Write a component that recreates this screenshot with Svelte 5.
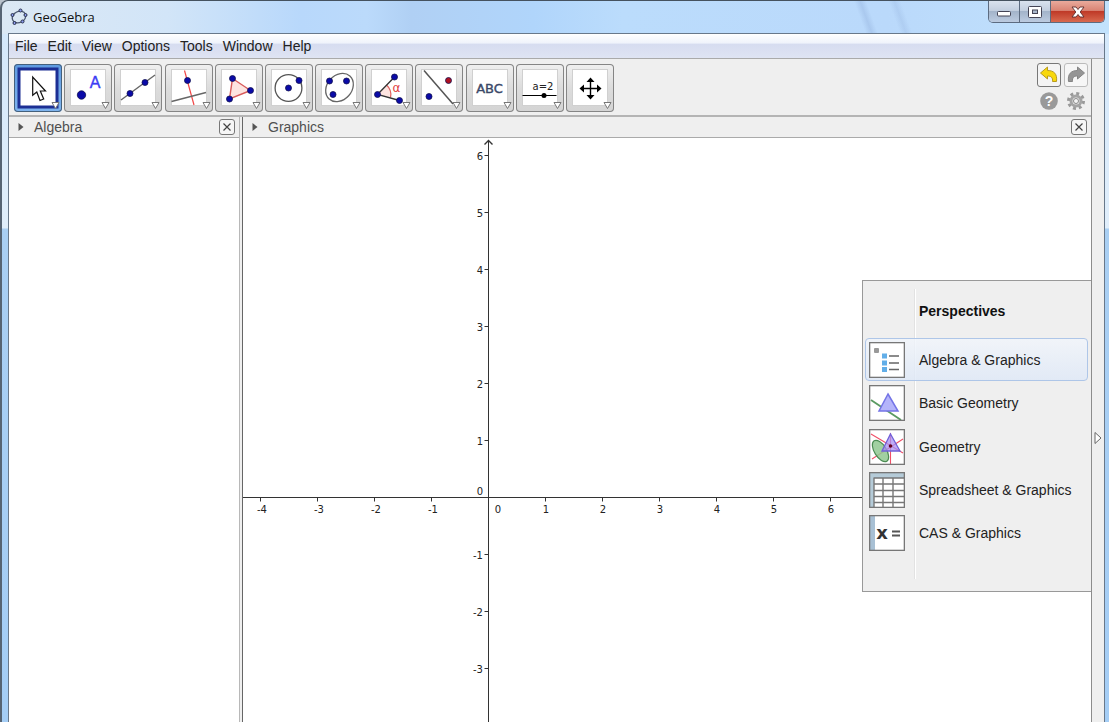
<script lang="ts">
  const menus = ['File', 'Edit', 'View', 'Options', 'Tools', 'Window', 'Help']

  const tools = [
    { id: 'move', label: 'Move' },
    { id: 'point', label: 'New Point' },
    { id: 'line', label: 'Line through Two Points' },
    { id: 'perpendicular', label: 'Perpendicular Line' },
    { id: 'polygon', label: 'Polygon' },
    { id: 'circle', label: 'Circle with Center through Point' },
    { id: 'ellipse', label: 'Ellipse' },
    { id: 'angle', label: 'Angle' },
    { id: 'reflect', label: 'Reflect about Line' },
    { id: 'text', label: 'Insert Text' },
    { id: 'slider', label: 'Slider' },
    { id: 'pan', label: 'Move Graphics View' },
  ]

  const perspectives = [
    { id: 'algebra', label: 'Algebra & Graphics' },
    { id: 'basic', label: 'Basic Geometry' },
    { id: 'geometry', label: 'Geometry' },
    { id: 'spreadsheet', label: 'Spreadsheet & Graphics' },
    { id: 'cas', label: 'CAS & Graphics' },
  ]

  // Graphics view: origin and unit length in pixels
  const origin = { x: 246, y: 360 }
  const unit = 57
  const xTicks = [-4, -3, -2, -1, 1, 2, 3, 4, 5, 6, 7, 8, 9, 10]
  const yTicks = [6, 5, 4, 3, 2, 1, -1, -2, -3]

  let activeTool = $state('move')
  let activePerspective = $state('algebra')
  let showPerspectives = $state(true)
  let showAlgebra = $state(true)
</script>

{#snippet dot(x: number, y: number, r = 3, color = '#0a0aa8')}
  <circle cx={x} cy={y} {r} fill={color} stroke="#101050" stroke-width="0.8" />
{/snippet}

{#snippet closeIcon()}
  <svg width="10" height="10" viewBox="0 0 10 10">
    <path d="M1.5 1.5L8.5 8.5M8.5 1.5L1.5 8.5" stroke="#444" stroke-width="1.2" />
  </svg>
{/snippet}

{#snippet toolIcon(id: string)}
  {#if id === 'move'}
    <path d="M18.7 13V31.3L22.8 28L26 36.5L29.7 35L26.3 27H31.5Z" fill="#fff" stroke="#111" stroke-width="1.2" />
  {:else if id === 'point'}
    {@render dot(17.5, 31, 4.2)}
    <text x="31" y="24" class="glyph-a">A</text>
  {:else if id === 'line'}
    <path d="M7 36L41 11" stroke="#666" stroke-width="1.4" />
    {@render dot(16, 29.5)}
    {@render dot(31, 18.5)}
  {:else if id === 'perpendicular'}
    <path d="M19.5 6.5L29 41" stroke="#f04848" stroke-width="1.2" />
    <path d="M6.5 37.5L41 28.5" stroke="#666" stroke-width="1.3" />
    {@render dot(22.5, 16.5)}
  {:else if id === 'polygon'}
    <path d="M17.5 14.5L35.5 26.5L14.5 35Z" fill="#fde4e0" stroke="#d85a5a" stroke-width="1.4" />
    {@render dot(17.5, 14.5)}
    {@render dot(35.5, 26.5)}
    {@render dot(14.5, 35)}
  {:else if id === 'circle'}
    <circle cx="23.5" cy="24" r="13.4" fill="none" stroke="#555" stroke-width="1.3" />
    {@render dot(23.5, 24)}
    {@render dot(34, 16.5)}
  {:else if id === 'ellipse'}
    <ellipse cx="24.5" cy="23.5" rx="15.5" ry="12.3" transform="rotate(-48 24.5 23.5)" fill="none" stroke="#666" stroke-width="1.3" />
    {@render dot(14.5, 17)}
    {@render dot(31.5, 17)}
    {@render dot(18, 30.5)}
  {:else if id === 'angle'}
    <path d="M12.5 30.5L21.5 21A13 13 0 0 1 25.5 33.5Z" fill="#fde4e0" />
    <path d="M21.5 21A13 13 0 0 1 25.5 33.5" fill="none" stroke="#e06060" stroke-width="1.2" />
    <path d="M29.5 13L12.5 30.5L34.5 36.5" fill="none" stroke="#333" stroke-width="1.3" />
    {@render dot(29.5, 13)}
    {@render dot(12.5, 30.5)}
    {@render dot(34.5, 36.5)}
    <text x="31.5" y="28" class="glyph-alpha">α</text>
  {:else if id === 'reflect'}
    <path d="M9 6.5L38 40" stroke="#555" stroke-width="1.5" />
    {@render dot(33.5, 16.5, 3, '#b01020')}
    {@render dot(14, 32.5)}
  {:else if id === 'text'}
    <text x="23.5" y="29" class="glyph-abc">ABC</text>
  {:else if id === 'slider'}
    <text x="27" y="26" class="glyph-slider">a=2</text>
    <path d="M6.5 31.5H40.5" stroke="#000" stroke-width="1.2" />
    <circle cx="28" cy="31.5" r="2.5" />
  {:else if id === 'pan'}
    <path d="M24.5 16V33M16 24.5H33" stroke="#000" stroke-width="1.4" />
    <path d="M24.5 13.5L28.5 18H20.5ZM24.5 35.5L28.5 31H20.5ZM13.5 24.5L18 20.5V28.5ZM35.5 24.5L31 20.5V28.5Z" />
  {/if}
{/snippet}

{#snippet perspectiveIcon(id: string)}
  {#if id === 'algebra'}
    <rect x="5" y="6" width="5" height="5" rx="1" fill="#999" />
    <path d="M13 11.5h5v5h-5zM13 18.5h5v5h-5zM13 25h5v5h-5z" fill="#62aee8" />
    <path d="M20 14H30M20 21H30M20 27.5H30" stroke="#666" stroke-width="1.5" />
  {:else if id === 'basic'}
    <path d="M2 15L32 35" stroke="#5a9a62" stroke-width="1.8" />
    <path d="M19 9L29 26H10Z" fill="#b4b4fa" stroke="#7474e6" stroke-width="1.5" />
  {:else if id === 'geometry'}
    <path d="M2 5L34 24M34 10L3 30M21.5 4V35" stroke="#f05068" stroke-width="1.1" />
    <ellipse cx="11.5" cy="22" rx="6" ry="12" transform="rotate(-32 11.5 22)" fill="#90c890" fill-opacity="0.85" stroke="#4c8c54" stroke-width="1.2" />
    <path d="M21.5 5L31 22H13Z" fill="#a890f4" fill-opacity="0.75" stroke="#7060d8" stroke-width="1.3" />
    <circle cx="21.5" cy="17" r="1.8" fill="#600020" />
  {:else if id === 'spreadsheet'}
    <path d="M1 1H35V6H5V35H1Z" fill="#b5cbd8" />
    <path d="M4.5 6H35M5 12H35M5 18.5H35M5 24.5H35M5 30.5H35M5 6V35M14 6V35M24 6V35" stroke="#777" stroke-width="1.4" />
  {:else if id === 'cas'}
    <rect x="1" y="1" width="5" height="34" fill="#a8c0d4" />
    <text x="13" y="24" class="glyph-cas">x</text>
    <path d="M23 16.5H31M23 20.5H31" stroke="#555" stroke-width="1.8" />
  {/if}
{/snippet}

<div class="window">
  <header class="titlebar">
    <svg class="logo" width="18" height="18" viewBox="0 0 18 18">
      <ellipse cx="9" cy="9" rx="7" ry="5.5" transform="rotate(-25 9 9)" fill="none" stroke="#4a5670" stroke-width="1.3" />
      <g fill="#8c9cf0" stroke="#28304c" stroke-width="1">
        <circle cx="10.5" cy="2.5" r="1.5" />
        <circle cx="15.5" cy="7" r="1.5" />
        <circle cx="12.5" cy="13.5" r="1.5" />
        <circle cx="4.5" cy="15" r="1.5" />
        <circle cx="2.5" cy="7" r="1.5" />
      </g>
    </svg>
    <h1>GeoGebra</h1>
    <div class="window-controls">
      <button aria-label="Minimize">
        <svg width="14" height="12" viewBox="0 0 14 12"><rect x="0.5" y="5.5" width="13" height="4.5" rx="1" fill="#fff" stroke="#445" /></svg>
      </button>
      <button aria-label="Maximize">
        <svg width="14" height="12" viewBox="0 0 14 12">
          <rect x="0.5" y="0.5" width="13" height="11" rx="1" fill="#fff" stroke="#445" />
          <rect x="4.5" y="4" width="5" height="3.5" fill="#a9b8cc" stroke="#445" />
        </svg>
      </button>
      <button class="close" aria-label="Close">
        <svg width="14" height="12" viewBox="0 0 14 12">
          <path d="M1 1H5L7 3.5L9 1H13L9.2 6L13 11H9L7 8.5L5 11H1L4.8 6Z" fill="#fff" stroke="#5c2a2a" stroke-width="0.9" />
        </svg>
      </button>
    </div>
  </header>

  <div class="client">
    <nav class="menubar">
      {#each menus as menu}
        <button>{menu}</button>
      {/each}
    </nav>

    <div class="workspace">
      <div class="main">
        <div class="toolbar">
          <div class="tools">
            {#each tools as tool}
              <button
                class="tool"
                class:active={activeTool === tool.id}
                aria-label={tool.label}
                onclick={() => (activeTool = tool.id)}
              >
                <svg width="48" height="48" viewBox="0 0 48 48">
                  {#if activeTool === tool.id}
                    <rect x="5" y="5" width="38" height="38" fill="#fff" stroke="#1c2f94" stroke-width="3" />
                  {:else}
                    <rect x="6.5" y="5.5" width="35" height="36" fill="#fff" stroke="#d0d0d0" />
                  {/if}
                  {@render toolIcon(tool.id)}
                  <path d="M38 38.5H45L41.5 44.5Z" fill="#fff" stroke="#777" />
                </svg>
              </button>
            {/each}
          </div>
          <div class="actions">
            <button class="undo" aria-label="Undo">
              <svg width="20" height="20" viewBox="0 0 20 20">
                <path d="M1.5 8L8.5 2V5.5C15 5.5 18.5 9 17.5 16.5H13.5C14 12.5 12 11 8.5 11V14Z" fill="#f8d80c" stroke="#b89a20" />
              </svg>
            </button>
            <button class="redo" aria-label="Redo">
              <svg width="20" height="20" viewBox="0 0 20 20">
                <path d="M18.5 8L11.5 2V5.5C5 5.5 1.5 9 2.5 16.5H6.5C6 12.5 8 11 11.5 11V14Z" fill="#959595" stroke="#858585" />
              </svg>
            </button>
            <button aria-label="Help">
              <svg width="20" height="20" viewBox="0 0 20 20">
                <circle cx="10" cy="10" r="8.8" fill="#999" />
                <text x="10" y="15" class="glyph-help">?</text>
              </svg>
            </button>
            <button aria-label="Settings">
              <svg width="20" height="20" viewBox="0 0 20 20">
                <circle cx="10" cy="10" r="7.5" fill="none" stroke="#999" stroke-width="3" stroke-dasharray="2.95 2.94" />
                <circle cx="10" cy="10" r="5" fill="#eee" stroke="#a4a4a4" stroke-width="3" />
                <circle cx="10" cy="10" r="2.5" fill="#f4f4f4" stroke="#888" />
              </svg>
            </button>
          </div>
        </div>

        <div class="views">
          {#if showAlgebra}
            <section class="algebra">
              <div class="view-header">
                <svg class="fold" width="6" height="8" viewBox="0 0 6 8"><path d="M0.5 0L5.5 4L0.5 8Z" fill="#555" /></svg>
                <h2>Algebra</h2>
                <button aria-label="Close Algebra" onclick={() => (showAlgebra = false)}>{@render closeIcon()}</button>
              </div>
              <div class="view-body"></div>
            </section>
          {/if}
          <section class="graphics">
            <div class="view-header">
              <svg class="fold" width="6" height="8" viewBox="0 0 6 8"><path d="M0.5 0L5.5 4L0.5 8Z" fill="#555" /></svg>
              <h2>Graphics</h2>
              <button aria-label="Close Graphics">{@render closeIcon()}</button>
            </div>
            <div class="view-body">
              <svg class="plot" width="100%" height="100%">
                <!-- half-pixel shift keeps the one pixel lines sharp -->
                <g stroke="#333" fill="none" transform="translate(-0.5 -0.5)">
                  <path d="M{origin.x - 4} 7L{origin.x} 3L{origin.x + 4} 7" stroke-width="1.4" />
                  <line x1={origin.x} y1="3" x2={origin.x} y2="101%" />
                  <line x1="0" y1={origin.y} x2="101%" y2={origin.y} />
                  {#each xTicks as t}
                    <line x1={origin.x + t * unit} y1={origin.y} x2={origin.x + t * unit} y2={origin.y + 4} />
                  {/each}
                  {#each yTicks as t}
                    <line x1={origin.x - 4} y1={origin.y - t * unit} x2={origin.x} y2={origin.y - t * unit} />
                  {/each}
                </g>
                {#each xTicks as t}
                  <text class="x-label" x={origin.x + t * unit + (t < 0 ? 1 : 0)} y={origin.y + 15}>{t}</text>
                {/each}
                {#each yTicks as t}
                  <text class="y-label" x={origin.x - 6} y={origin.y - t * unit + 4}>{t}</text>
                {/each}
                <text class="x-label" x={origin.x + 9} y={origin.y + 15}>0</text>
                <text class="y-label" x={origin.x - 6} y={origin.y - 3}>0</text>
              </svg>

              {#if showPerspectives}
                <div class="perspectives">
                  <h3>Perspectives</h3>
                  <div class="perspective-list">
                    {#each perspectives as item}
                      <button
                        class="perspective"
                        class:active={activePerspective === item.id}
                        onclick={() => (activePerspective = item.id)}
                      >
                        <svg width="36" height="36" viewBox="0 0 36 36">
                          <rect width="36" height="36" fill="#fff" />
                          {@render perspectiveIcon(item.id)}
                          <rect x="0.5" y="0.5" width="35" height="35" fill="none" stroke="#777" stroke-width="1.6" />
                        </svg>
                        <span>{item.label}</span>
                      </button>
                    {/each}
                  </div>
                </div>
              {/if}
            </div>
          </section>
        </div>
      </div>

      <button class="sidebar-toggle" aria-label="Perspectives" onclick={() => (showPerspectives = !showPerspectives)}>
        <svg width="8" height="14" viewBox="0 0 8 14"><path d="M1 1.5L7 7L1 12.5Z" fill="#fff" stroke="#666" /></svg>
      </button>
    </div>
  </div>
</div>

<style>
  :global(body) {
    margin: 0;
    background: #b9c2cc;
  }

  button {
    margin: 0;
    padding: 0;
    border: none;
    background: transparent;
    font: inherit;
    color: inherit;
  }

  svg {
    display: block;
  }

  .window {
    box-sizing: border-box;
    display: flex;
    flex-direction: column;
    height: 100vh;
    padding: 0 4px 0 6px;
    border-top: 1px solid #45525f;
    border-left: 2px solid #566473;
    border-radius: 8px 0 0 0;
    background:
      linear-gradient(70deg, transparent 0 57%, rgba(140, 170, 215, 0.35) 59%, transparent 61%, transparent 68%, rgba(140, 170, 215, 0.25) 70%, transparent 72%) 85% 0 / 300px 33px no-repeat,
      linear-gradient(90deg, #dbe8f4 0, #d2e5f8 15%, #b8d8fb 27%, #bbdafb 33%, #b0d0f4 37%, #b0d5fb 48%, #bbdcfc 56%, #bad9fb 80%, #c2e2fc) 0 0 / 100% 33px no-repeat,
      linear-gradient(#d2e7fb 0, #e0eefb 227px, #a9cff3 228px, #a4cdf5 100%);
    font-family: "Liberation Sans", Arial, sans-serif;
    font-size: 14px;
    color: #222;
  }

  .titlebar {
    display: flex;
    align-items: center;
    height: 32px;
    flex: none;
    padding-left: 2px;
  }

  h1,
  h2,
  h3 {
    margin: 0;
    font-size: 14px;
    font-weight: normal;
  }

  h1 {
    margin-left: 5px;
    font-family: "Open Sans", sans-serif;
    font-size: 13px;
    color: #111;
  }

  .window-controls {
    display: flex;
    align-self: flex-start;
    margin-left: auto;
    height: 21px;
    border: 1px solid #5c6b80;
    border-top: none;
    border-radius: 0 0 5px 5px;
    overflow: hidden;
  }

  .window-controls button {
    display: flex;
    align-items: center;
    justify-content: center;
    width: 31px;
    border-right: 1px solid #5c6b80;
    background: linear-gradient(#d9e2ee 0, #c3cfdf 45%, #a3b4ca 50%, #bccbe0 100%);
  }

  .window-controls .close {
    width: 53px;
    border-right: none;
    background: linear-gradient(#e9aa9c 0, #d98474 45%, #bf3a28 50%, #d8694f 100%);
  }

  .client {
    display: flex;
    flex-direction: column;
    flex: 1;
    min-height: 0;
    border: 1px solid #68788a;
    border-bottom: none;
    background: #efefef;
  }

  .menubar {
    display: flex;
    align-items: center;
    gap: 10px;
    height: 24px;
    flex: none;
    padding: 0 6px;
    border-bottom: 1px solid #aaa;
    background: linear-gradient(#fff 0, #eff3fb 38%, #d6dcf0 42%, #dfe4f3 100%);
  }

  .workspace {
    display: flex;
    flex: 1;
    min-height: 0;
  }

  .main {
    display: flex;
    flex-direction: column;
    flex: 1;
    min-width: 0;
    border-right: 1px solid #8c8c8c;
  }

  .toolbar {
    display: flex;
    justify-content: space-between;
    flex: none;
    height: 51px;
    padding: 5px 3px 0 5px;
    border-bottom: 2px solid #b4b4b4;
  }

  .tools {
    display: flex;
    justify-content: space-between;
    width: 600px;
  }

  .tool {
    box-sizing: border-box;
    width: 48px;
    height: 48px;
    border-radius: 4px;
    box-shadow: inset 0 0 0 1px #858585;
    background: linear-gradient(#f0f0f0, #dcdcdc 50%, #d4d4d4);
  }

  .tool.active {
    box-shadow: inset 0 0 0 1px #44607c;
    background: linear-gradient(#5f9be0, #7fb4ee);
  }

  .actions {
    display: grid;
    grid-template-columns: 24px 24px;
    grid-template-rows: 24px 24px;
    gap: 2px 3px;
    margin-top: -1px;
  }

  .actions button {
    box-sizing: border-box;
    display: flex;
    align-items: center;
    justify-content: center;
    border-radius: 3px;
  }

  .actions .undo {
    border: 1px solid #777;
    background: #f4f4f4;
  }

  .actions .redo {
    border: 1px solid #bbb;
    background: #f6f6f6;
  }

  .views {
    display: flex;
    flex: 1;
    min-height: 0;
  }

  .algebra,
  .graphics {
    display: flex;
    flex-direction: column;
  }

  .algebra {
    width: 230px;
    flex: none;
    border-right: 1px solid #b8b8b8;
    margin-right: 2px;
  }

  .graphics {
    flex: 1;
    min-width: 0;
    border-left: 1px solid #666;
  }

  .view-header {
    display: flex;
    align-items: center;
    height: 20px;
    flex: none;
    padding: 0 4px 0 9px;
    border-bottom: 1px solid #aaa;
  }

  .view-header h2 {
    margin-left: 10px;
    color: #505050;
  }

  .view-header button {
    box-sizing: border-box;
    display: flex;
    align-items: center;
    justify-content: center;
    width: 16px;
    height: 16px;
    margin-left: auto;
    border: 1px solid #777;
    border-radius: 3px;
    background: #f6f6f6;
  }

  .view-body {
    position: relative;
    flex: 1;
    min-height: 0;
    background: #fff;
  }

  .plot {
    position: absolute;
    inset: 0;
  }

  .plot text {
    font-family: "DejaVu Sans", sans-serif;
    font-size: 10px;
    fill: #222;
  }

  .x-label {
    text-anchor: middle;
  }

  .y-label {
    text-anchor: end;
  }

  .perspectives {
    position: absolute;
    top: 142px;
    right: 0;
    box-sizing: border-box;
    width: 229px;
    padding: 0 3px 36px 2px;
    border: 1px solid #999;
    border-right: none;
    background: linear-gradient(90deg, transparent 51px, #e2e2e2 51px 52px, #fff 52px 53px, transparent 53px) 0 8px / 100% 290px no-repeat #efefef;
  }

  h3 {
    box-sizing: border-box;
    height: 57px;
    padding: 2px 0 0 54px;
    font-weight: bold;
    line-height: 57px;
    color: #111;
  }

  .perspective-list {
    display: flex;
    flex-direction: column;
    height: 217px;
  }

  .perspective {
    display: flex;
    align-items: center;
    flex: 1;
    gap: 14px;
    padding: 0 3px;
    border: 1px solid transparent;
    border-radius: 4px;
    text-align: left;
    white-space: nowrap;
  }

  .perspective.active {
    border-color: #aec6e8;
    background: linear-gradient(rgba(241, 245, 251, 0.8), rgba(222, 232, 247, 0.8));
  }

  .sidebar-toggle {
    box-sizing: border-box;
    display: flex;
    align-items: center;
    width: 12px;
    flex: none;
    padding: 94px 2px 0;
  }

  .glyph-a {
    font: 16px "Liberation Sans", sans-serif;
    text-anchor: middle;
    fill: #3c3cf4;
    stroke: #3c3cf4;
    stroke-width: 0.4px;
  }

  .glyph-alpha {
    font: 12px "DejaVu Sans", sans-serif;
    text-anchor: middle;
    fill: #e04040;
  }

  .glyph-abc {
    font: 13px "DejaVu Sans", sans-serif;
    text-anchor: middle;
    fill: #3a4868;
    stroke: #3a4868;
    stroke-width: 0.4px;
  }

  .glyph-slider {
    font: 10px "DejaVu Sans", sans-serif;
    text-anchor: middle;
    fill: #222;
  }

  .glyph-help {
    font: bold 14px "Liberation Sans", sans-serif;
    text-anchor: middle;
    fill: #fff;
  }

  .glyph-cas {
    font: bold 18px "DejaVu Sans", sans-serif;
    text-anchor: middle;
    fill: #333;
  }
</style>
